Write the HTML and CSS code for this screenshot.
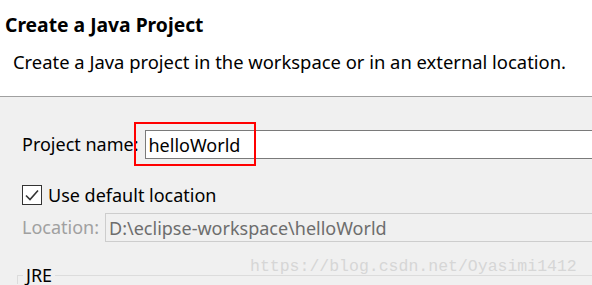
FILE: index.html
```html
<!DOCTYPE html>
<html lang="en">
<head>
    <meta charset="UTF-8" />
    <title>New Java Project</title>
    <link rel="stylesheet" href="styles.css">
</head>
<body>
    <div class="header">
        <h1 class="title">Create a Java Project</h1>
        <p class="desc">Create a Java project in the workspace or in an external location.</p>
    </div>
    <div class="content">
        <div class="row name-row">
            <label class="label" for="project-name">Project name:</label>
            <input class="field" id="project-name" type="text" value="helloWorld" />
            <div class="highlight"></div>
        </div>
        <div class="row check-row">
            <span class="checkbox">
                <svg width="14" height="12" viewBox="0 0 14 12">
                    <path d="M1 6.5 L5 10.5 L13 1.5" fill="none" stroke="#333" stroke-width="1.6" />
                </svg>
            </span>
            <span class="check-label">Use default location</span>
        </div>
        <div class="row location-row">
            <label class="label disabled">Location:</label>
            <input class="field field-disabled" type="text" value="D:\eclipse-workspace\helloWorld" disabled />
        </div>
        <fieldset class="group">
            <legend>JRE</legend>
        </fieldset>
    </div>
    <div class="watermark">https://blog.csdn.net/Oyasimi1412</div>
</body>
</html>
```

FILE: styles.css
```css
:root {
    --text-color: #000;
    --panel-bg: #f0f0f0;
    --sep-color: #a0a0a0;
    --disabled-text: #a0a0a0;
}

body {
    margin: 0;
    font-family: "Noto Sans", sans-serif;
    color: var(--text-color);
    background: var(--panel-bg);
    width: 592px;
    height: 285px;
    overflow: hidden;
    position: relative;
}

/* white banner at the top of the wizard */
.header {
    background: #fff;
    height: 96px;
    border-bottom: 1px solid var(--sep-color);
    padding: 0 0 0 5px;
}

.title {
    margin: 0;
    padding-top: 12px;
    font-size: 19.3px;
    font-weight: 700;
    line-height: 26px;
}

.desc {
    margin: 0;
    padding: 10px 0 0 8px;
    font-size: 18.4px;
    line-height: 28px;
}

.content {
    padding: 33px 0 0 22px;
}

.row {
    display: flex;
    align-items: center;
    position: relative;
}

.label {
    font-size: 18px;
    line-height: 29px;
    white-space: nowrap;
}

.label.disabled {
    color: var(--disabled-text);
}

.field {
    flex: 1;
    height: 29px;
    box-sizing: border-box;
    margin: 0 0 0 6px;
    border: 1px solid #7a7a7a;
    border-right: none;
    padding: 0 0 0 3px;
    font-family: inherit;
    font-size: 18px;
    color: #000;
    background: #fff;
    outline: none;
}

/* red annotation drawn over the screenshot */
.highlight {
    position: absolute;
    left: 112px;
    top: -8px;
    width: 118px;
    height: 40px;
    border: 2px solid #f00;
}

.check-row {
    margin-top: 23px;
}

.checkbox {
    width: 18px;
    height: 18px;
    border: 1px solid #333;
    background: #fff;
    display: flex;
    align-items: center;
    justify-content: center;
}

.check-label {
    font-size: 18px;
    line-height: 26px;
    margin-left: 6px;
}

.location-row {
    margin-top: 5px;
}

.location-row .field {
    margin-left: 6px;
}

.field-disabled {
    background: var(--panel-bg);
    border-color: #cdcdcd;
    color: #6d6d6d;
}

.group {
    margin: 24px 0 0 -5px;
    padding: 0;
    border: none;
    border-top: 1px solid #dcdcdc;
    border-left: 1px solid #dcdcdc;
    height: 2px;
}

.group legend {
    font-size: 18px;
    padding: 0 3px;
    margin-left: 5px;
    line-height: 18px;
}

.watermark {
    position: absolute;
    left: 250px;
    top: 257px;
    font-family: "Liberation Mono", monospace;
    font-size: 16.5px;
    color: #d6d6d6;
}
```
